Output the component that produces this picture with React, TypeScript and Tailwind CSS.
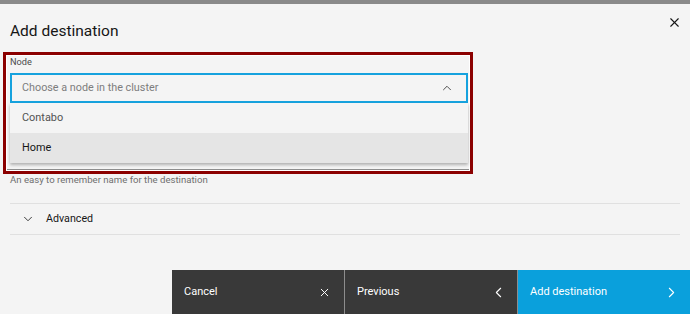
import { X, ChevronUp, ChevronDown, ChevronLeft, ChevronRight } from "lucide-react";

const font = { fontFamily: "Roboto, 'Liberation Sans', sans-serif" };

const NodeOption = ({ label, active }: { label: string; active?: boolean }) => (
  <div
    className={`h-[30px] flex items-center pl-[12px] text-[10.9px] ${
      active ? "bg-[#e5e5e5] text-[#161616]" : "bg-[#f4f4f4] text-[#525252]"
    }`}
  >
    {label}
  </div>
);

const FooterButton = ({
  label,
  icon,
  primary,
}: {
  label: string;
  icon: React.ReactNode;
  primary?: boolean;
}) => (
  <button
    className={`w-[172px] h-[44px] flex items-center justify-between pl-[12px] pr-[10px] text-[11px] text-white text-left ${
      primary ? "bg-[#0aa0dc]" : "bg-[#393939]"
    }`}
  >
    <span>{label}</span>
    {icon}
  </button>
);

export default function App() {
  return (
    <div
      className="w-[690px] h-[314px] bg-[#f4f4f4] flex flex-col overflow-hidden text-[#161616]"
      style={font}
    >
      <div className="h-[4px] bg-[#8a8a8a]" />

      <div className="h-[48px] flex justify-between items-start pl-[10px] pr-[8px]">
        <h2 className="pt-[17px] text-[15.5px] leading-[20px] font-normal">
          Add destination
        </h2>
        <button className="mt-[11px] text-[#161616]">
          <X size={15} strokeWidth={1.8} />
        </button>
      </div>

      <div className="flex flex-col px-[10px]">
        {/* annotated node picker */}
        <div className="-ml-[7px] w-[470px] border-[3px] border-[#8b0000]">
          <div className="border border-white">
            <div className="flex flex-col pb-[6px] border-b border-[#8d8d8d]">
              <label className="pl-[3px] text-[9.2px] leading-[12px] text-[#4a4a4a]">
                Node
              </label>
              <div className="ml-[3px] mt-[5px] w-[458px] flex flex-col">
                <div className="h-[30px] border-2 border-[#16a2de] flex items-center justify-between pl-[10px] pr-[12px]">
                  <span className="text-[10.8px] text-[#7d7d7d]">
                    Choose a node in the cluster
                  </span>
                  <ChevronUp size={14} strokeWidth={1.5} className="text-[#393939]" />
                </div>
                <div className="flex flex-col shadow-[0_2px_3px_rgba(0,0,0,0.28)]">
                  <NodeOption label="Contabo" />
                  <NodeOption label="Home" active />
                </div>
              </div>
            </div>
          </div>
        </div>

        <p className="text-[9.6px] leading-[11px] text-[#6f6f6f]">
          An easy to remember name for the destination
        </p>

        <div className="mt-[18px] h-[32px] border-y border-[#e0e0e0] flex items-center pl-[11px] gap-[11px]">
          <ChevronDown size={14} strokeWidth={1.4} className="text-[#161616]" />
          <span className="text-[10.7px]">Advanced</span>
        </div>
      </div>

      <div className="mt-auto flex justify-end">
        <div className="flex gap-px bg-[#8d8d8d]">
          <FooterButton
            label="Cancel"
            icon={<X size={13} strokeWidth={1.8} className="mr-[3px]" />}
          />
          <FooterButton label="Previous" icon={<ChevronLeft size={17} strokeWidth={1.5} />} />
          <FooterButton
            label="Add destination"
            primary
            icon={<ChevronRight size={17} strokeWidth={1.5} />}
          />
        </div>
      </div>
    </div>
  );
}
